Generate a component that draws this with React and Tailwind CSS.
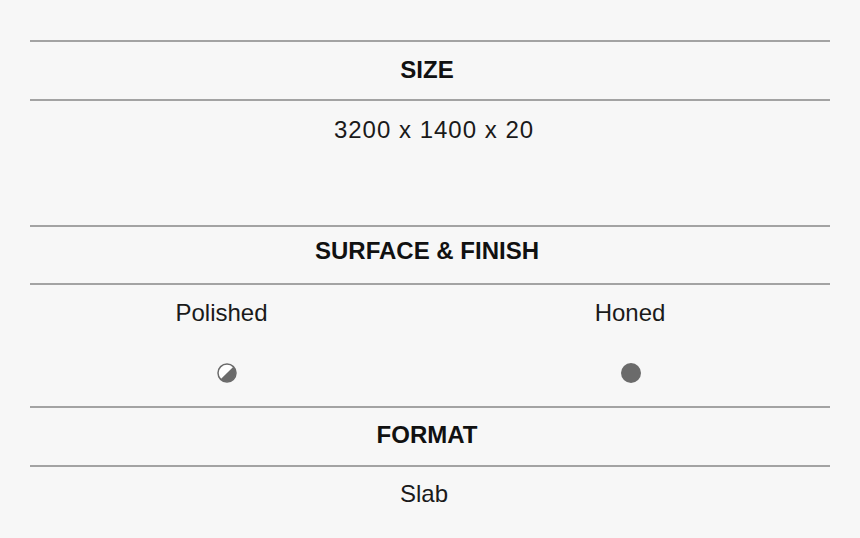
const HalfCircle = () => (
  <svg width="20" height="20" viewBox="0 0 20 20">
    <circle cx="10" cy="10" r="9" fill="#ffffff" stroke="#6b6b6b" strokeWidth="1.5" />
    <path d="M16.36 3.64 A9 9 0 0 1 3.64 16.36 Z" fill="#6b6b6b" />
  </svg>
);

const FullCircle = () => (
  <svg width="20" height="20" viewBox="0 0 20 20">
    <circle cx="10" cy="10" r="10" fill="#6b6b6b" />
  </svg>
);

const Heading = ({ children, className }) => (
  <div
    className={`border-b-2 border-[#a3a3a3] pr-[6px] text-center text-[24px] font-bold leading-[28px] text-[#111] ${className}`}
  >
    {children}
  </div>
);

const App = () => {
  return (
    <div
      className="h-[538px] w-[860px] overflow-hidden bg-[#f7f7f7] px-[30px] pt-[40px] text-[#1a1a1a]"
      style={{ fontFamily: '"Liberation Sans", Arial, sans-serif' }}
    >
      <div className="border-t-2 border-[#a3a3a3]">
        <Heading className="h-[59px] pt-[14px]">SIZE</Heading>
        <div className="h-[126px] border-b-2 border-[#a3a3a3] pl-[8px] pt-[15px] text-center text-[24px] leading-[28px] tracking-[1px]">
          3200 x 1400 x 20
        </div>
        <Heading className="h-[58px] pt-[10px]">SURFACE &amp; FINISH</Heading>
        <div className="h-[123px] border-b-2 border-[#a3a3a3] pt-[14px]">
          <div className="grid grid-cols-2 text-center text-[24px] leading-[28px]">
            <div className="flex flex-col items-center">
              <span className="mr-[17px]">Polished</span>
              <div className="mr-[6px] mt-[36px]">
                <HalfCircle />
              </div>
            </div>
            <div className="flex flex-col items-center">
              <span>Honed</span>
              <div className="ml-[2px] mt-[36px]">
                <FullCircle />
              </div>
            </div>
          </div>
        </div>
        <Heading className="h-[59px] pt-[13px]">FORMAT</Heading>
        <div className="pr-[12px] pt-[13px] text-center text-[24px] leading-[28px]">Slab</div>
      </div>
    </div>
  );
};

export default App;
